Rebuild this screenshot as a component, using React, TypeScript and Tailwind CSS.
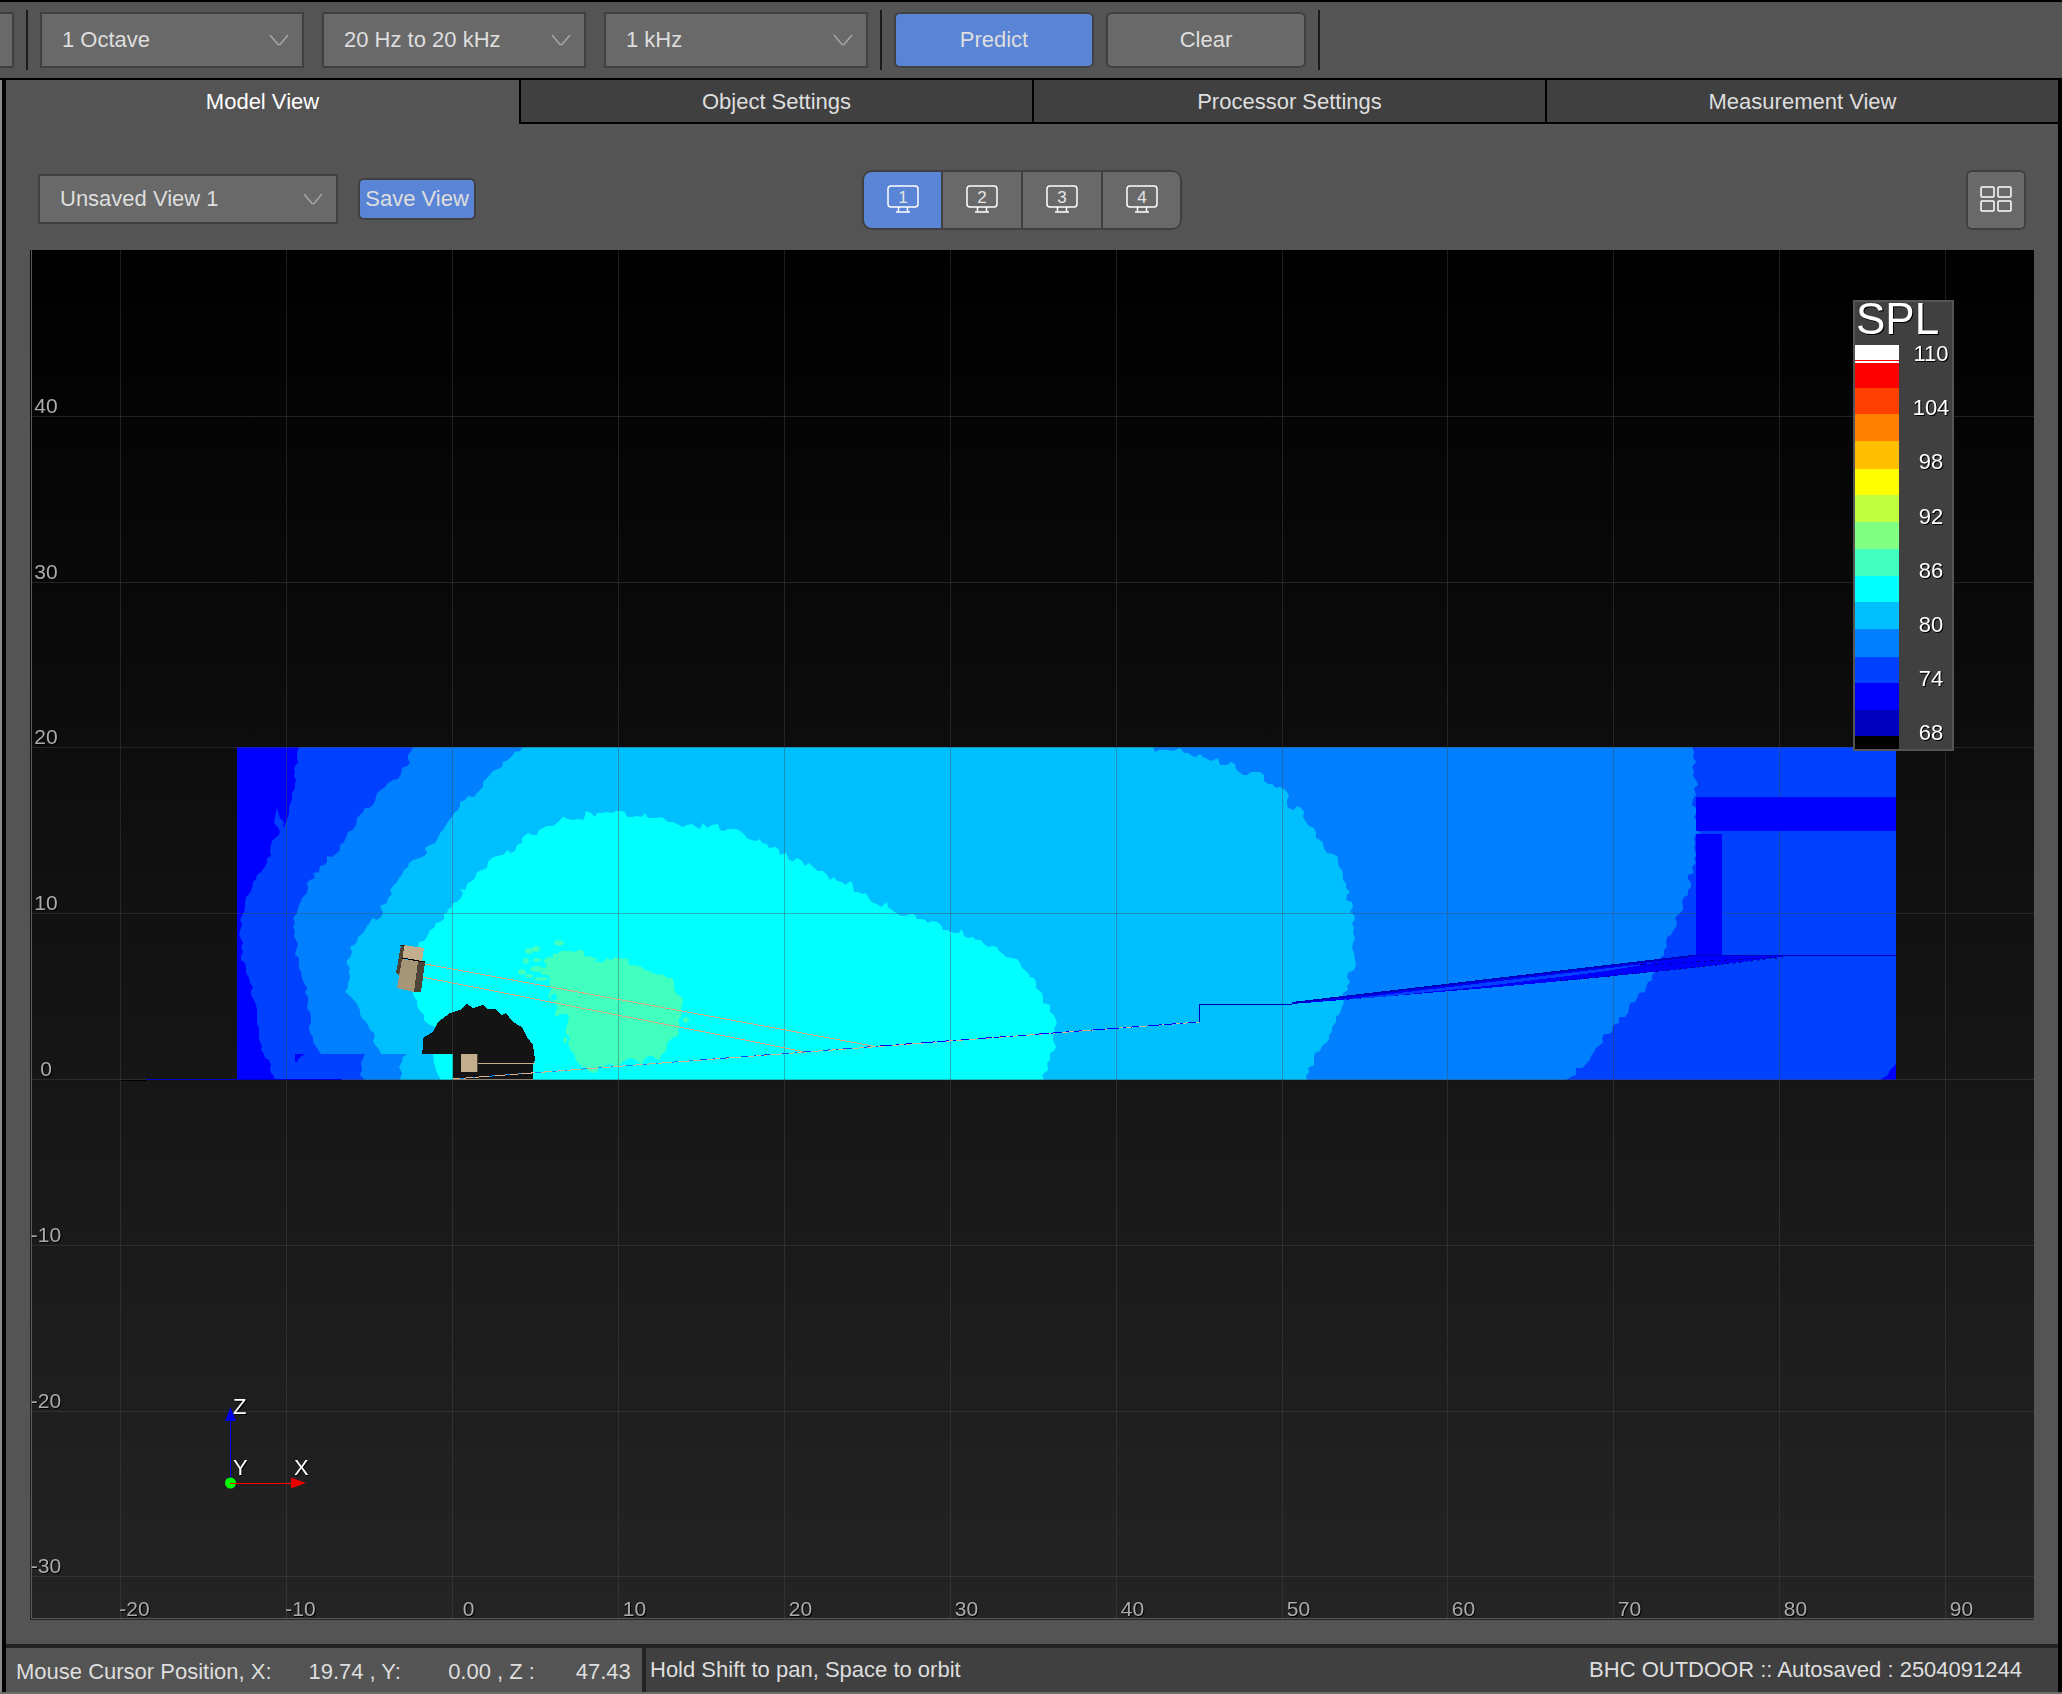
import clsx from "clsx";
import { ReactNode, useState } from "react";

const TABS = [
  "Model View",
  "Object Settings",
  "Processor Settings",
  "Measurement View",
];

// world coordinates (metres) to drawing coordinates
const toX = (metres: number) => Math.round(452 + metres * 16.59) + 0.5;
const toY = (metres: number) => Math.round(1079 - metres * 16.58) + 0.5;

const X_TICKS = [-20, -10, 0, 10, 20, 30, 40, 50, 60, 70, 80, 90];
const Y_TICKS = [40, 30, 20, 10, 0, -10, -20, -30];

const LEGEND_BANDS = [
  { y: 345, color: "#ffffff" },
  { y: 360, color: "#ff0000" },
  { y: 361, color: "#ffffff" },
  { y: 363, color: "#ff0000" },
  { y: 388, color: "#ff4000" },
  { y: 414, color: "#ff8000" },
  { y: 441, color: "#ffbf00" },
  { y: 469, color: "#ffff00" },
  { y: 495, color: "#bfff40" },
  { y: 522, color: "#80ff80" },
  { y: 549, color: "#40ffbf" },
  { y: 576, color: "#00ffff" },
  { y: 602, color: "#00bfff" },
  { y: 629, color: "#0080ff" },
  { y: 657, color: "#0040ff" },
  { y: 683, color: "#0000ff" },
  { y: 710, color: "#0000bf" },
  { y: 736, color: "#000000" },
];
const LEGEND_END = 749;
const LEGEND_LABELS = [110, 104, 98, 92, 86, 80, 74, 68];

const BAND_74 =
  "299,747 297,753 298,762 294,768 296,780 295,788 292,793 292,800 289,808 288,817 284,827 280,830 275,838 271,845 271,856 267,858 264,868 257,875 253,882 250,893 245,903 244,912 240,920 241,928 239,934 243,943 241,960 246,967 249,978 253,987 251,995 256,1005 257,1020 259,1028 259,1038 261,1050 265,1058 271,1065 271,1073 275,1080 1896,1080 1896,747";

const BAND_76 =
  "413,747 408,755 410,763 402,768 398,779 388,783 377,793 373,805 365,808 357,818 356,825 348,832 346,838 337,853 332,857 327,856 327,862 320,866 319,872 313,873 315,878 307,883 307,893 302,898 300,903 297,913 293,918 293,927 296,940 296,950 299,963 301,972 302,978 307,988 305,993 308,1002 307,1008 311,1017 309,1027 313,1037 313,1042 317,1048 321,1054 453,1054 453,1080 1566,1080 1576,1075 1576,1068 1582,1068 1587,1063 1594,1052 1603,1042 1604,1034 1612,1032 1613,1025 1619,1023 1619,1017 1625,1017 1628,1013 1630,1003 1635,1002 1639,993 1645,992 1648,982 1655,972 1660,958 1667,947 1667,937 1671,935 1676,927 1675,918 1680,913 1683,905 1684,897 1691,887 1688,875 1694,873 1692,867 1696,863 1694,847 1696,834 1701,833 1696,830 1696,808 1692,805 1696,795 1694,788 1698,785 1696,780 1692,767 1696,762 1692,747";

const BAND_80 =
  "523,747 515,752 508,760 503,762 502,767 493,771 488,777 483,782 483,787 477,793 465,800 460,802 458,810 452,817 447,823 440,833 438,838 430,845 425,848 427,853 420,858 413,860 408,867 402,875 397,882 393,886 390,890 392,894 387,903 380,906 383,912 377,920 372,918 370,923 365,930 358,937 357,942 350,947 352,952 350,958 347,960 349,972 348,983 345,992 352,998 357,1004 360,1010 362,1018 367,1023 370,1030 375,1037 375,1045 381,1054 453,1054 453,1080 1307,1080 1308,1068 1314,1065 1315,1053 1326,1043 1332,1032 1336,1017 1342,1007 1343,993 1348,990 1348,973 1354,970 1355,960 1354,953 1353,943 1354,928 1352,923 1354,915 1350,912 1352,902 1346,900 1350,892 1346,888 1343,875 1339,867 1338,857 1327,853 1323,843 1316,838 1314,828 1306,822 1304,812 1297,806 1294,810 1288,808 1287,792 1280,787 1268,784 1260,772 1251,772 1247,775 1239,772 1231,762 1227,765 1220,765 1218,758 1211,761 1200,754 1196,757 1184,753 1180,748 1173,751 1164,750 1155,752 1153,747";

const BAND_84 =
  "430,1025 427,1023 424,1015 418,1008 417,1000 413,993 413,960 418,947 419,942 427,937 430,930 440,922 448,912 447,910 457,902 463,893 460,889 465,890 468,883 475,878 477,872 487,868 492,858 503,855 508,850 510,853 522,843 522,838 528,833 537,835 543,828 557,823 563,817 573,820 583,820 586,811 595,817 597,813 607,812 625,812 627,817 642,817 645,813 648,818 662,817 668,822 677,824 683,827 692,824 700,829 703,823 707,828 718,824 720,830 736,829 751,840 760,839 769,848 776,847 780,855 786,853 789,860 797,858 805,866 809,863 814,868 823,871 830,880 834,877 845,885 851,881 854,892 866,893 873,903 881,907 887,902 892,910 901,916 910,914 928,923 937,922 943,930 959,933 962,929 964,936 981,940 988,947 997,947 1006,957 1017,959 1022,968 1028,973 1036,982 1036,988 1042,993 1043,1003 1050,1005 1050,1012 1056,1020 1055,1032 1053,1040 1056,1047 1050,1053 1050,1060 1047,1063 1048,1070 1042,1075 1044,1080 500,1080 460,1030 440,1026";

const BAND_86 =
  "543,960 553,957 553,953 570,951 583,950 585,957 598,958 593,963 602,963 607,958 628,958 629,965 642,967 653,973 672,978 675,992 682,997 682,1013 678,1020 679,1035 670,1040 665,1052 660,1060 653,1056 645,1058 642,1065 636,1060 630,1058 620,1065 607,1065 593,1073 582,1067 575,1058 570,1050 568,1043 570,1037 565,1033 568,1023 563,1013 555,1017 558,1008 548,997 552,988 548,975 540,972 547,966";

const SUB_SHADOW =
  "422,1054 423,1047 423,1038 433,1032 438,1022 450,1013 460,1010 467,1004 473,1008 483,1005 487,1009 495,1009 502,1015 506,1013 513,1022 522,1027 527,1037 533,1045 535,1060 533,1065 533,1080 453,1080 453,1054";

// small islands of the 86 dB band left of its main area
const ISLANDS = [
  [529, 951, 4, 3],
  [536, 949, 4, 3],
  [559, 943, 5, 3],
  [526, 961, 3, 3],
  [537, 960, 4, 2],
  [522, 972, 4, 3],
  [529, 976, 4, 2],
  [537, 969, 7, 3],
  [541, 979, 7, 2],
  [565, 1040, 2, 3],
  [686, 1020, 3, 3],
];

// breaks a contour into short steps, the way the coarse prediction mesh does
const roughen = (points: string) => {
  const list = points.split(" ").map((pair) => pair.split(",").map(Number));
  const result: number[][] = [];

  list.forEach(([x, y], index) => {
    result.push([x, y]);
    const [nextX, nextY] = list[(index + 1) % list.length];
    const length = Math.hypot(nextX - x, nextY - y);
    if (length > 24) return;

    const steps = Math.floor(length / 4);
    for (let step = 1; step < steps; step++) {
      const t = step / steps;
      const noise = Math.sin((x + step * 7) * 12.9 + y * 78.2) * 1.6;
      result.push([
        Math.round(x + (nextX - x) * t + (noise * (nextY - y)) / length),
        Math.round(y + (nextY - y) * t - (noise * (nextX - x)) / length),
      ]);
    }
  });

  return result.map((pair) => pair.join(",")).join(" ");
};

interface DropDownProps {
  label: string;
  options: string[];
  className: string;
}

function DropDown({ label, options, className }: DropDownProps) {
  return (
    <div className={clsx("relative shrink-0", className)}>
      <select
        aria-label={label}
        className="h-full w-full appearance-none border-2 border-[#404040] bg-[#696969] pl-5 pr-12 text-[22px] text-[#dedede] outline-none"
      >
        {options.map((option) => (
          <option key={option}>{option}</option>
        ))}
      </select>
      <svg
        className="pointer-events-none absolute inset-y-0 right-[15px] my-auto h-3 w-5"
        viewBox="0 0 20 12"
        fill="none"
        stroke="#a6a6a6"
        strokeWidth="1.5"
      >
        <path d="M1 1 L9 10.500 H11 L19 1" />
      </svg>
    </div>
  );
}

function Separator({ className }: { className?: string }) {
  return <div className={clsx("h-[60px] w-0.5 bg-[#1a1a1a]", className)} />;
}

function Toolbar() {
  return (
    <header className="flex h-20 items-center border-y-2 border-black">
      <div className="h-14 w-[14px] border-2 border-l-0 border-[#404040] bg-[#696969]" />
      <Separator className="mx-3" />
      <div className="flex gap-[18px]">
        <DropDown
          label="Smoothing"
          options={["1 Octave"]}
          className="h-14 w-[264px]"
        />
        <DropDown
          label="Frequency range"
          options={["20 Hz to 20 kHz"]}
          className="h-14 w-[264px]"
        />
        <DropDown
          label="Centre frequency"
          options={["1 kHz"]}
          className="h-14 w-[264px]"
        />
      </div>
      <Separator className="mx-3" />
      <div className="flex gap-3">
        <button className="h-14 w-[200px] rounded-md border-2 border-[#404040] bg-[#5a84d6] text-[#dedede]">
          Predict
        </button>
        <button className="h-14 w-[200px] rounded-md border-2 border-[#404040] bg-[#696969] text-[#dedede]">
          Clear
        </button>
      </div>
      <Separator className="mx-3" />
    </header>
  );
}

function Tabs() {
  return (
    <nav className="grid grid-cols-4" role="tablist">
      {TABS.map((tab, index) => (
        <button
          key={tab}
          role="tab"
          aria-selected={index === 0}
          className={clsx(
            "h-11 border-b-2 pt-0.5",
            index === 0
              ? "border-transparent text-white"
              : "border-l-2 border-black bg-[#404040] text-[#dedede]"
          )}
        >
          {tab}
        </button>
      ))}
    </nav>
  );
}

function MonitorIcon({ children }: { children: ReactNode }) {
  return (
    <svg
      className="h-7 w-8"
      viewBox="0 0 32 28"
      fill="none"
      stroke="#fff"
      strokeWidth="1.5"
    >
      <rect x="1" y="1" width="30" height="21" rx="3" />
      <path d="M11.500 22 V26.500 M20.500 22 V26.500 M9 27 H23" />
      <text
        x="16"
        y="18"
        textAnchor="middle"
        fontSize="17"
        fill="#e6e6e6"
        stroke="none"
      >
        {children}
      </text>
    </svg>
  );
}

function ViewBar() {
  const [active, setActive] = useState(1);

  return (
    <div className="grid grid-cols-[1fr_auto_1fr] items-center px-8">
      <div className="flex items-center gap-5 pb-0.5">
        <DropDown
          label="Saved view"
          options={["Unsaved View 1"]}
          className="h-[50px] w-[300px]"
        />
        <button className="h-[42px] w-[118px] whitespace-nowrap rounded-md border-2 border-[#404040] bg-[#5a84d6] text-[#dedede]">
          Save View
        </button>
      </div>
      <div className="mr-5 flex h-[60px] divide-x-2 divide-[#404040] overflow-hidden rounded-[10px] border-2 border-[#404040]">
        {[1, 2, 3, 4].map((view) => (
          <button
            key={view}
            aria-label={`View ${view}`}
            aria-pressed={view === active}
            onClick={() => setActive(view)}
            className={clsx(
              "flex w-20 items-center justify-center pb-0.5 first:w-[79px] last:w-[77px]",
              view === active ? "bg-[#5a84d6]" : "bg-[#696969]"
            )}
          >
            <MonitorIcon>{view}</MonitorIcon>
          </button>
        ))}
      </div>
      <button
        aria-label="Split view"
        className="flex h-[60px] w-[60px] items-center justify-center justify-self-end rounded-md border-2 border-[#404040] bg-[#696969] pb-0.5"
      >
        <svg
          className="h-[26px] w-8"
          viewBox="0 0 32 26"
          fill="none"
          stroke="#fff"
          strokeWidth="1.5"
        >
          <rect x="1" y="1" width="13" height="10" rx="1" />
          <rect x="18" y="1" width="13" height="10" rx="1" />
          <rect x="1" y="15" width="13" height="10" rx="1" />
          <rect x="18" y="15" width="13" height="10" rx="1" />
        </svg>
      </button>
    </div>
  );
}

function HeatMap() {
  return (
    <g>
      <rect x="237" y="747" width="1659" height="333" fill="#0000ff" />
      <polygon points={roughen(BAND_74)} fill="#0040ff" />
      <polygon
        points="277,807 274,823 279,829 281,836 284,822 280,818 278,812"
        fill="#0040ff"
      />
      <polygon points={roughen(BAND_76)} fill="#0080ff" />
      <polygon points={roughen(BAND_80)} fill="#00bfff" />
      <polygon points={roughen(BAND_84)} fill="#00ffff" />
      <polygon points={roughen(BAND_86)} fill="#40ffbf" />
      {ISLANDS.map(([cx, cy, rx, ry]) => (
        <ellipse key={`${cx}-${cy}`} cx={cx} cy={cy} rx={rx} ry={ry} fill="#40ffbf" />
      ))}
      <circle cx="554" cy="997" r="3" fill="#00ffff" />
      <circle cx="566" cy="1017" r="3" fill="#00ffff" />

      {/* stage front, below the deck */}
      <rect x="295" y="1054" width="158" height="26" fill="#0040ff" />
      <polygon
        points="365,1054 361,1063 362,1070 360,1075 365,1080 453,1080 453,1054"
        fill="#0080ff"
      />
      <polygon
        points="407,1054 402,1058 403,1060 399,1067 402,1073 400,1080 453,1080 453,1054"
        fill="#00bfff"
      />
      <polygon
        points="433,1054 434,1063 437,1073 441,1080 453,1080 453,1054"
        fill="#00ffff"
      />
      <polygon
        points="295,1054 305,1054 299,1058 297,1062 295,1062"
        fill="#0000ff"
      />
      <polygon
        points="1896,1064 1890,1070 1888,1075 1880,1080 1896,1080"
        fill="#0000ff"
      />
      <polygon points={SUB_SHADOW} fill="#141414" shapeRendering="crispEdges" />
    </g>
  );
}

function Grid() {
  return (
    <g stroke="#4a4a4a" strokeOpacity="0.4" shapeRendering="crispEdges">
      {X_TICKS.map((tick) => (
        <line key={tick} x1={toX(tick)} x2={toX(tick)} y1="250" y2="1620" />
      ))}
      {Y_TICKS.map((tick) => (
        <line key={tick} x1="30" x2="2034" y1={toY(tick)} y2={toY(tick)} />
      ))}
    </g>
  );
}

function Venue() {
  return (
    <g shapeRendering="crispEdges" fill="none">
      <path d="M121 1080.500 H146" stroke="#000" />
      <path d="M146 1079.500 H342" stroke="#0000c8" />
      <rect x="1696" y="797" width="200" height="34" fill="#0000ff" />
      <rect x="1696" y="834" width="26" height="121" fill="#0000ff" />

      <polygon
        points="1292,1004 1696,955 1787,956 1701,967 1594,978 1487,988 1380,997"
        fill="#0000ff"
      />
      <polygon
        points="1340,1000 1500,981 1660,962 1600,972 1487,986 1380,997"
        fill="#0040ff"
      />
      <path d="M1292 1003 L1692 956" stroke="#0000bf" strokeWidth="2" />
      <path
        d="M1560 981 L1700 967 L1787 957"
        stroke="#00006a"
        strokeDasharray="2 5 1 4"
      />
      <path
        d="M1640 965 L1780 957"
        stroke="#0000a0"
        strokeDasharray="5 3 2 4"
      />
      <path d="M1690 955.500 H1896" stroke="#0000bf" />
      <path d="M1199.500 1022 V1004.500 H1292" stroke="#0000bf" />

      <path d="M425 964 L873 1046" stroke="#d9a87e" />
      <path d="M422 977 L720 1035 L805 1052" stroke="#d9a87e" />
      <path d="M453 1079.500 H533" stroke="#8a8070" />
      <path d="M453 1079 L1199 1022" stroke="#d9b48e" />
      <path
        d="M460 1078.500 L700 1060"
        stroke="#0090ff"
        strokeDasharray="4 9 2 14 6 11"
      />
      <path
        d="M700 1060 L880 1046"
        stroke="#0050f0"
        strokeDasharray="7 6 2 5 9 12"
      />
      <path
        d="M880 1046 L1199 1022"
        stroke="#0000ff"
        strokeDasharray="12 4 3 5 8 9 14 2"
      />

      <rect x="461" y="1054" width="16" height="18" fill="#c2ae8c" />
      <path d="M477.500 1054 V1072" stroke="#4d4638" />
      <path d="M478 1063.500 H535" stroke="#c2ae8c" />

      <polygon points="401,945 405,946 403,958 399,975 396,973" fill="#4d4335" />
      <polygon points="404,945 424,948 422,961 403,958" fill="#c2ae8c" />
      <polygon points="402,959 418,961 414,992 397,988" fill="#a69678" />
      <polygon points="418,961 425,962 421,992 414,992" fill="#4d4638" />
      <path d="M402 958 L425 962" stroke="#000" />
      <path d="M400 945.500 H405" stroke="#2b251c" />
    </g>
  );
}

function AxisLabels() {
  return (
    <g
      className="drop-shadow-[1px_1px_0_#000]"
      fontSize="21"
      fill="#ababab"
      textAnchor="middle"
    >
      {X_TICKS.map((tick) => (
        <text key={tick} x={toX(tick) + (tick < 0 ? 14 : 16)} y="1616">
          {tick}
        </text>
      ))}
      {Y_TICKS.map((tick) => (
        <text key={tick} x="46" y={toY(tick) - 4}>
          {tick}
        </text>
      ))}
    </g>
  );
}

function AxisGizmo() {
  return (
    <g>
      <path d="M230.500 1483 V1421" stroke="#0000e6" />
      <polygon points="230.500,1407 225,1421 236,1421" fill="#0000e6" />
      <circle cx="230.500" cy="1483" r="5.500" fill="#00ff00" />
      <path d="M230 1483.500 H291" stroke="#ff0000" />
      <polygon points="306,1483 291,1477.500 291,1488.500" fill="#e60000" />
      <g className="drop-shadow-[1px_1px_0_#000]" fontSize="22" fill="#fff">
        <text x="233" y="1414">
          Z
        </text>
        <text x="233" y="1475">
          Y
        </text>
        <text x="294" y="1475">
          X
        </text>
      </g>
    </g>
  );
}

function Legend() {
  return (
    <g>
      <rect
        x="1854"
        y="301"
        width="99"
        height="449"
        fill="#404040"
        stroke="#555"
        strokeWidth="2"
      />
      {LEGEND_BANDS.map(({ y, color }, index) => (
        <rect
          key={y}
          x="1855"
          y={y}
          width="44"
          height={(LEGEND_BANDS[index + 1]?.y ?? LEGEND_END) - y}
          fill={color}
        />
      ))}
      <g className="drop-shadow-[1px_1px_0_#000]" fill="#fff">
        <text x="1856" y="334" fontSize="44">
          SPL
        </text>
        <g fontSize="22" textAnchor="middle">
          {LEGEND_LABELS.map((label, index) => (
            <text key={label} x="1931" y={361 + Math.round(index * 54.2)}>
              {label}
            </text>
          ))}
        </g>
      </g>
    </g>
  );
}

function ModelView() {
  return (
    <svg
      className="block w-full"
      viewBox="30 250 2004 1370"
      role="img"
      aria-label="SPL prediction, section view"
    >
      <defs>
        <linearGradient id="backdrop" x1="0" y1="0" x2="0" y2="1">
          <stop offset="0" stopColor="#000" />
          <stop offset="1" stopColor="#242424" />
        </linearGradient>
      </defs>
      <rect x="30" y="250" width="2004" height="1370" fill="url(#backdrop)" />
      <HeatMap />
      <Grid />
      <Venue />
      <path d="M31.500 250 V1618.500 H2034" stroke="#5a5a5a" fill="none" />
      <AxisLabels />
      <AxisGizmo />
      <Legend />
    </svg>
  );
}

function StatusBar() {
  return (
    <footer className="flex h-12 border-t-4 border-[#222222] text-[#dedede]">
      <div className="flex w-[640px] shrink-0 items-center whitespace-nowrap border-r-4 border-[#222222] pl-[10px] pt-1">
        <span>Mouse Cursor Position, X:</span>
        <span className="w-[92px] text-right">19.74</span>
        <span className="pl-1.5">, Y:</span>
        <span className="w-[90px] text-right">0.00</span>
        <span className="pl-1.5">, Z :</span>
        <span className="w-24 text-right">47.43</span>
      </div>
      <div className="flex grow items-center justify-between bg-[#404040] pl-1 pr-9">
        <span>Hold Shift to pan, Space to orbit</span>
        <span>BHC OUTDOOR :: Autosaved : 2504091244</span>
      </div>
    </footer>
  );
}

export default function App() {
  return (
    <div className="flex min-h-screen flex-col border-b-2 border-[#6e6e6e] bg-[#545454] font-['Liberation_Sans',Arial,sans-serif] text-[22px] leading-7">
      <Toolbar />
      <div className="flex grow flex-col border-l-2 border-[#8a8a8a]">
        <div className="flex grow flex-col border-x-4 border-black">
          <Tabs />
          <main className="flex grow flex-col gap-5 pb-6 pt-[46px]">
            <ViewBar />
            <div className="px-6">
              <ModelView />
            </div>
          </main>
          <StatusBar />
        </div>
      </div>
    </div>
  );
}
